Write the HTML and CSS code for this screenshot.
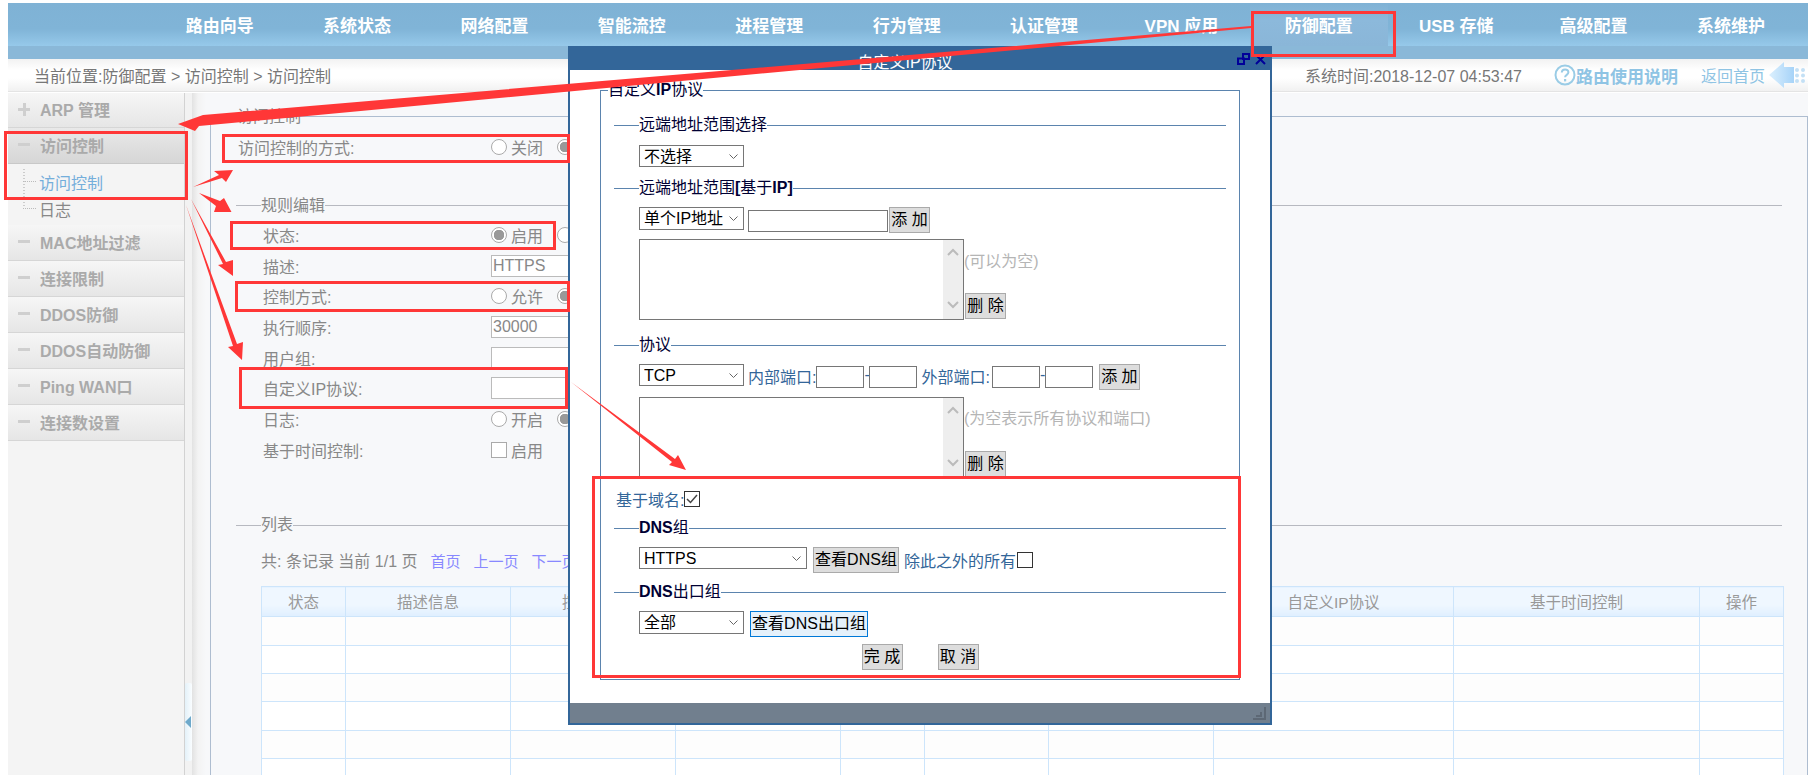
FILE: index.html
```html
<!DOCTYPE html>
<html lang="zh-CN">
<head>
  <meta charset="UTF-8">
  <title>访问控制</title>
  <link rel="stylesheet" href="styles.css">
</head>
<body>
  <div class="nav">
    <div class="nav-item">路由向导</div>
    <div class="nav-item">系统状态</div>
    <div class="nav-item">网络配置</div>
    <div class="nav-item">智能流控</div>
    <div class="nav-item">进程管理</div>
    <div class="nav-item">行为管理</div>
    <div class="nav-item">认证管理</div>
    <div class="nav-item">VPN 应用</div>
    <div class="nav-item active">防御配置</div>
    <div class="nav-item">USB 存储</div>
    <div class="nav-item">高级配置</div>
    <div class="nav-item">系统维护</div>
  </div>
  <div class="band"></div>

  <div class="crumbs">
    <div class="crumb-path">当前位置:防御配置 &gt; 访问控制 &gt; 访问控制</div>
    <div class="sys-time">系统时间:2018-12-07 04:53:47</div>
    <svg class="help-icon" width="22" height="22" viewBox="0 0 22 22">
      <circle cx="11" cy="11" r="9.5" fill="none" stroke="#9accE6" stroke-width="2"/>
      <path d="M7.8 8.6c0-4.2 6.6-4.2 6.6-.3 0 2.6-3.3 2.5-3.3 5" fill="none" stroke="#9accE6" stroke-width="2"/>
      <rect x="10" y="15" width="2.2" height="2.4" fill="#9accE6"/>
    </svg>
    <div class="help-link">路由使用说明</div>
    <div class="home-link">返回首页</div>
    <svg class="home-icon" width="37" height="27" viewBox="0 0 37 27">
      <defs>
        <linearGradient id="homeFill">
          <stop offset="0" stop-color="#dcf0fe"/>
          <stop offset="1" stop-color="#a6d3f8"/>
        </linearGradient>
      </defs>
      <polygon points="0,13 15,0 15,5 25,5 25,21 15,21 15,26" fill="url(#homeFill)"/>
      <g fill="#c3e0f5">
        <circle cx="28" cy="8" r="2"/><circle cx="34" cy="8" r="2"/>
        <circle cx="28" cy="13.500" r="2"/><circle cx="34" cy="13.500" r="2"/>
        <circle cx="28" cy="19" r="2"/><circle cx="34" cy="19" r="2"/>
      </g>
    </svg>
  </div>

  <div class="main">
    <div class="sidebar">
      <div class="side-head"><span class="toggle plus"></span>ARP 管理</div>
      <div class="side-head open"><span class="toggle"></span>访问控制</div>
      <div class="tree">
        <div class="tree-item current">访问控制</div>
        <div class="tree-item">日志</div>
      </div>
      <div class="side-head"><span class="toggle"></span>MAC地址过滤</div>
      <div class="side-head"><span class="toggle"></span>连接限制</div>
      <div class="side-head"><span class="toggle"></span>DDOS防御</div>
      <div class="side-head"><span class="toggle"></span>DDOS自动防御</div>
      <div class="side-head"><span class="toggle"></span>Ping WAN口</div>
      <div class="side-head"><span class="toggle"></span>连接数设置</div>
    </div>

    <div class="splitter"><div class="split-tab"><span class="split-arrow"></span></div></div>

    <div class="content">
      <div class="panel">
        <div class="panel-title">访问控制</div>
        <div class="form-row top-row">
          <div class="form-label wide">访问控制的方式:</div>
          <input class="radio" type="radio" name="way"><span class="opt">关闭</span>
          <input class="radio" type="radio" name="way" checked><span class="opt">开启</span>
        </div>

        <div class="sec-title gray rule-title"><span>规则编辑</span></div>
        <div class="rule-form">
          <div class="form-row">
            <div class="form-label">状态:</div>
            <input class="radio" type="radio" name="state" checked><span class="opt">启用</span>
            <input class="radio" type="radio" name="state"><span class="opt">禁用</span>
          </div>
          <div class="form-row">
            <div class="form-label">描述:</div>
            <input class="field" type="text" value="HTTPS">
          </div>
          <div class="form-row">
            <div class="form-label">控制方式:</div>
            <input class="radio" type="radio" name="ctrl"><span class="opt">允许</span>
            <input class="radio" type="radio" name="ctrl" checked><span class="opt">禁止</span>
          </div>
          <div class="form-row">
            <div class="form-label">执行顺序:</div>
            <input class="field" type="text" value="30000">
          </div>
          <div class="form-row">
            <div class="form-label">用户组:</div>
            <input class="field" type="text">
          </div>
          <div class="form-row">
            <div class="form-label">自定义IP协议:</div>
            <input class="field" type="text">
          </div>
          <div class="form-row">
            <div class="form-label">日志:</div>
            <input class="radio" type="radio" name="log"><span class="opt">开启</span>
            <input class="radio" type="radio" name="log" checked><span class="opt">关闭</span>
          </div>
          <div class="form-row">
            <div class="form-label">基于时间控制:</div>
            <span class="check light"></span><span class="opt">启用</span>
          </div>
        </div>

        <div class="sec-title gray list-title"><span>列表</span></div>
        <div class="pager">
          <span>共: 条记录 当前 1/1 页</span>
          <span class="pager-link">首页</span>
          <span class="pager-link">上一页</span>
          <span class="pager-link">下一页</span>
          <span class="pager-link">尾页</span>
        </div>

        <table class="list">
          <colgroup>
            <col class="c1"><col class="c2"><col class="c2"><col class="c2"><col class="c1">
            <col class="c3"><col class="c2"><col class="c4"><col class="c5"><col class="c1">
          </colgroup>
          <tr>
            <th>状态</th><th>描述信息</th><th>控制方式</th><th>执行顺序</th><th>日志</th>
            <th>用户组</th><th>目的地址</th><th>自定义IP协议</th><th>基于时间控制</th><th>操作</th>
          </tr>
          <tr><td></td><td></td><td></td><td></td><td></td><td></td><td></td><td></td><td></td><td></td></tr>
          <tr><td></td><td></td><td></td><td></td><td></td><td></td><td></td><td></td><td></td><td></td></tr>
          <tr><td></td><td></td><td></td><td></td><td></td><td></td><td></td><td></td><td></td><td></td></tr>
          <tr><td></td><td></td><td></td><td></td><td></td><td></td><td></td><td></td><td></td><td></td></tr>
          <tr><td></td><td></td><td></td><td></td><td></td><td></td><td></td><td></td><td></td><td></td></tr>
          <tr><td></td><td></td><td></td><td></td><td></td><td></td><td></td><td></td><td></td><td></td></tr>
        </table>
      </div>
    </div>
  </div>

  <div class="modal">
    <div class="modal-title">
      <span>自定义IP协议</span>
      <svg class="modal-icons" width="30" height="12" viewBox="0 0 30 12">
        <g fill="none" stroke="#000099" stroke-width="2">
          <rect x="1" y="5.500" width="6" height="5.500"/>
          <rect x="6" y="1" width="6" height="5"/>
          <path d="M19 11l9-9M19 2l9 9"/>
        </g>
      </svg>
    </div>

    <div class="modal-body">
      <fieldset class="proto">
        <legend>自定义<b>IP</b>协议</legend>

        <div class="sec-title first"><span>远端地址范围选择</span></div>
        <div class="row r-range">
          <span class="sel-wrap">
            <select class="sel"><option>不选择</option></select>
            <svg class="chev" width="9" height="5" viewBox="0 0 9 5"><path d="M.5.500l4 4 4-4" fill="none" stroke="#666"/></svg>
          </span>
        </div>

        <div class="sec-title gap-11"><span>远端地址范围<b>[</b>基于<b>IP]</b></span></div>
        <div class="row r-btn">
          <span class="sel-wrap tall">
            <select class="sel"><option>单个IP地址</option></select>
            <svg class="chev" width="9" height="5" viewBox="0 0 9 5"><path d="M.5.500l4 4 4-4" fill="none" stroke="#666"/></svg>
          </span>
          <input class="box ip-input" type="text">
          <button class="btn add">添 加</button>
        </div>
        <div class="list-row ip-list">
          <div class="listbox">
            <textarea></textarea>
            <div class="scroll">
              <svg width="12" height="8" viewBox="0 0 12 8"><path d="M1 7l5-5 5 5" fill="none" stroke="#bbb" stroke-width="2"/></svg>
              <svg width="12" height="8" viewBox="0 0 12 8"><path d="M1 1l5 5 5-5" fill="none" stroke="#bbb" stroke-width="2"/></svg>
            </div>
          </div>
          <div class="list-side">
            <div class="note">(可以为空)</div>
            <button class="btn del">删 除</button>
          </div>
        </div>

        <div class="sec-title gap-15"><span>协议</span></div>
        <div class="row r-btn">
          <span class="sel-wrap">
            <select class="sel"><option>TCP</option></select>
            <svg class="chev" width="9" height="5" viewBox="0 0 9 5"><path d="M.5.500l4 4 4-4" fill="none" stroke="#666"/></svg>
          </span>
          <span class="blue port-label">内部端口:</span>
          <input class="box port" type="text"><span class="dash">-</span><input class="box port" type="text">
          <span class="blue port-label outer">外部端口:</span>
          <input class="box port" type="text"><span class="dash">-</span><input class="box port" type="text">
          <button class="btn port-add">添 加</button>
        </div>
        <div class="list-row proto-list">
          <div class="listbox">
            <textarea></textarea>
            <div class="scroll">
              <svg width="12" height="8" viewBox="0 0 12 8"><path d="M1 7l5-5 5 5" fill="none" stroke="#bbb" stroke-width="2"/></svg>
              <svg width="12" height="8" viewBox="0 0 12 8"><path d="M1 1l5 5 5-5" fill="none" stroke="#bbb" stroke-width="2"/></svg>
            </div>
          </div>
          <div class="list-side">
            <div class="note">(为空表示所有协议和端口)</div>
            <button class="btn del">删 除</button>
          </div>
        </div>

        <div class="domain-row">
          <span class="blue">基于域名:</span>
          <span class="check ticked">
            <svg width="12" height="10" viewBox="0 0 12 10"><path d="M1 5l3.500 3.500L11 1" fill="none" stroke="#444" stroke-width="1.500"/></svg>
          </span>
        </div>

        <div class="sec-title gap-9"><span><b>DNS</b>组</span></div>
        <div class="row r-btn">
          <span class="sel-wrap dns">
            <select class="sel"><option>HTTPS</option></select>
            <svg class="chev" width="9" height="5" viewBox="0 0 9 5"><path d="M.5.500l4 4 4-4" fill="none" stroke="#666"/></svg>
          </span>
          <button class="btn view-dns">查看DNS组</button>
          <span class="blue except">除此之外的所有</span>
          <span class="check"></span>
        </div>

        <div class="sec-title gap-9"><span><b>DNS</b>出口组</span></div>
        <div class="row r-btn">
          <span class="sel-wrap tall">
            <select class="sel"><option>全部</option></select>
            <svg class="chev" width="9" height="5" viewBox="0 0 9 5"><path d="M.5.500l4 4 4-4" fill="none" stroke="#666"/></svg>
          </span>
          <button class="btn view-out">查看DNS出口组</button>
        </div>

        <div class="actions">
          <button class="btn">完 成</button>
          <button class="btn">取 消</button>
        </div>
      </fieldset>
    </div>

    <div class="modal-foot">
      <svg width="13" height="14" viewBox="0 0 13 14">
        <path d="M12 0v12H0M8 5v4H3" fill="none" stroke="#5d6875" stroke-width="2"/>
      </svg>
    </div>
  </div>

  <!-- red notes drawn on top of the screenshot -->
  <svg class="notes" width="1812" height="775" viewBox="0 0 1812 775">
    <g fill="none" stroke="#ff3737" stroke-width="3">
      <rect x="1252.500" y="12.500" width="142" height="43"/>
      <rect x="5.500" y="132.500" width="181" height="66"/>
      <rect x="223.500" y="135.500" width="345" height="26"/>
      <rect x="231.500" y="222.500" width="323" height="26"/>
      <rect x="236.500" y="282.500" width="332" height="28"/>
      <rect x="240.500" y="368.500" width="326" height="39"/>
      <rect x="593.500" y="477.500" width="646" height="199"/>
    </g>
    <g fill="#ff3737">
      <polygon points="1251,26 203,115 178,124 195,131 199,126 1251,28"/>
      <polygon points="193,187 219,175 214,171 233,170 226,182 222,178"/>
      <polygon points="199,193 220,201 224,198 231.500,212 214,212 216,206"/>
      <polygon points="191,199 226,262 233,260 233,276 218,265 223,264"/>
      <polygon points="186,205 237,344 243,342 242,360 228,347 233,346"/>
      <polygon points="571,382 675,459 678,455 686,470 669,465 672,462"/>
    </g>
  </svg>
</body>
</html>
```

FILE: styles.css
```css
* {
  box-sizing: border-box;
}

html,
body {
  height: 775px;
  overflow: hidden;
}

body {
  margin: 0;
  padding: 3px 4px 0 8px;
  background: #fff;
  font-family: "Liberation Sans", "Noto Sans CJK SC", sans-serif;
  font-size: 16px;
  color: #888;
}

/* top bar */
.nav {
  display: flex;
  height: 43px;
  padding-left: 143px;
  background: linear-gradient(#7fb2d5 0%, #80b4d7 60%, #96c9ea 100%);
}

.nav-item {
  display: flex;
  width: 137.4px;
  align-items: center;
  justify-content: center;
  color: #fff;
  font-size: 17px;
  font-weight: bold;
}

.nav-item.active {
  background: linear-gradient(#7fb2d5 0, #8cb9db 40%, #8ab6d8 100%);
}

.band {
  height: 13px;
  background: #8ab8d8;
}

.crumbs {
  display: flex;
  height: 33px;
  align-items: center;
  padding: 0 2px 0 26px;
  background: linear-gradient(#f2f2f2, #fff 35%, #fff 60%, #f1f1f1);
  border-bottom: 1px solid #e4e4e4;
  color: #777;
}

.crumb-path {
  flex: 1;
}

.help-icon {
  margin-left: 32px;
}

.help-link {
  color: #8fc4e4;
  font-size: 17px;
  font-weight: bold;
}

.home-link {
  margin-left: 23px;
  color: #8fc4e4;
}

.home-icon {
  margin-left: 4px;
}

/* page body */
.main {
  display: flex;
  height: 683px;
  margin-top: 1px;
}

.sidebar {
  width: 177px;
  flex: none;
  background: #f4f4f4;
  border-right: 1px solid #d2d2d2;
}

.side-head {
  display: flex;
  height: 36px;
  align-items: center;
  padding: 0 0 2px 10px;
  background: linear-gradient(#f6f6f6, #e6e6e6);
  border-bottom: 1px solid #d6d6d6;
  color: #aaa;
  font-weight: bold;
}

.side-head:first-child {
  height: 35px;
}

.side-head.open {
  background: linear-gradient(#e9e9e9, #d6d6d6);
  border-bottom-color: #c8c8c8;
}

.toggle {
  position: relative;
  width: 12px;
  height: 3px;
  margin-right: 10px;
  background: #cfcfcf;
}

.toggle.plus::after {
  content: "";
  position: absolute;
  top: -5px;
  left: 5px;
  width: 3px;
  height: 13px;
  background: #cfcfcf;
}

.tree {
  height: 61px;
  padding: 4px 0 0 15px;
  background: repeating-linear-gradient(#ccc 0 1px, transparent 1px 3px) 15px 5px / 2px 39px no-repeat;
}

.tree-item {
  display: flex;
  height: 27px;
  align-items: center;
}

.tree-item::before {
  content: "";
  width: 13px;
  margin-right: 3px;
  border-top: 1px dotted #bbb;
}

.tree-item.current {
  color: #74aedb;
}

.splitter {
  width: 7px;
  flex: none;
  padding-top: 590px;
  background: #f2f2f2;
}

.split-tab {
  display: flex;
  height: 78px;
  align-items: center;
  background: linear-gradient(90deg, #e3f1f9, #fafdff);
  border-radius: 2px;
}

.split-arrow {
  border-top: 6px solid transparent;
  border-bottom: 6px solid transparent;
  border-right: 6px solid #6ea9cb;
}

.content {
  flex: 1;
  padding: 23px 0 0 18px;
  background: linear-gradient(90deg, #e2e2e2, #f3f3f3 6px, #f7f8fa 14px);
}

.panel {
  height: 660px;
  background: #f7f8fa;
  border: 1px solid #aebdd0;
  border-bottom: 0;
}

.panel-title {
  height: 18px;
  margin: -9px 0 0 26px;
  line-height: 18px;
}

.form-row {
  display: flex;
  height: 30.7px;
  align-items: center;
  color: #888;
}

.top-row {
  margin: 6px 0 0 27px;
}

.form-label {
  width: 228px;
  flex: none;
}

.form-label.wide {
  width: 253px;
}

.rule-form {
  margin: 4px 0 0 52px;
}

.radio {
  width: 16px;
  height: 16px;
  flex: none;
  margin: 0 4px 0 0;
  appearance: none;
  background: #fff;
  border: 1px solid #aaa;
  border-radius: 50%;
}

.radio:checked {
  background: radial-gradient(circle, #999 0 5px, #fff 5.5px);
}

.opt {
  width: 46px;
  flex: none;
  color: #888;
}

.field {
  width: 160px;
  height: 22px;
  flex: none;
  padding: 0 1px;
  background: #fff;
  border: 1px solid #bbb;
  font: 16px "Liberation Sans", "Noto Sans CJK SC", sans-serif;
  color: #888;
}

/* section heading with a rule running either side */
.sec-title {
  display: flex;
  height: 20px;
  align-items: center;
  margin: 0 13px;
  color: #003;
  line-height: 20px;
}

.sec-title::before {
  content: "";
  width: 25px;
  height: 1px;
  background: #5b84ae;
}

.sec-title::after {
  content: "";
  flex: 1;
  height: 1px;
  background: #5b84ae;
}

.sec-title.gray {
  margin: 0 25px;
  color: #888;
}

.sec-title.gray::before,
.sec-title.gray::after {
  background: #b7b9c0;
}

.rule-title {
  margin-top: 33px !important;
}

.list-title {
  margin-top: 50px !important;
}

.pager {
  display: flex;
  height: 20px;
  align-items: center;
  gap: 13px;
  margin: 15px 0 0 50px;
}

.pager-link {
  color: #8888ff;
  font-size: 15px;
}

.pager-link:first-of-type {
  margin-left: 3px;
}

.list {
  width: 1521px;
  margin: 16px 0 0 50px;
  table-layout: fixed;
  border-collapse: collapse;
}

.c1 {
  width: 84px;
}

.c2 {
  width: 165px;
}

.c3 {
  width: 124px;
}

.c4 {
  width: 240px;
}

.c5 {
  width: 246px;
}

.list th,
.list td {
  height: 28.4px;
  padding: 0;
  border: 1px solid #cde5fb;
  background: #fff;
}

.list tr:nth-child(even) td {
  background: #fdfdfd;
}

.list th {
  height: 30px;
  padding-bottom: 2px;
  background: linear-gradient(#eff7ff 60%, #dfefff);
  color: #999;
  font-size: 15.500px;
  font-weight: normal;
}

/* dialog */
.modal {
  position: absolute;
  top: 46px;
  left: 568px;
  display: flex;
  width: 704px;
  height: 679px;
  flex-direction: column;
  background: #fff;
  border: 2px solid #336699;
}

.modal-title {
  position: relative;
  height: 22px;
  flex: none;
  overflow: hidden;
  padding: 5px 30px 0 0;
  background: #336699;
  color: #fff;
  font-size: 16px;
  line-height: 20px;
  text-align: center;
}

.modal-icons {
  position: absolute;
  top: 5px;
  right: 3px;
}

.modal-body {
  flex: 1;
  padding: 11px 0 0 30px;
  color: #000;
}

.proto {
  width: 640px;
  height: 599px;
  margin: 0;
  padding: 0;
  border: 1px solid #5b84ae;
}

.proto legend {
  height: 18px;
  margin-left: 7px;
  padding: 0;
  color: #003;
  line-height: 18px;
}

.sec-title.first {
  margin-top: 16px;
}

.gap-9 {
  margin-top: 9px;
}

.gap-11 {
  margin-top: 11px;
}

.gap-15 {
  margin-top: 15px;
}

.row {
  display: flex;
  align-items: flex-start;
  margin-left: 38px;
}

.r-range {
  margin-top: 10px;
}

.r-btn {
  margin-top: 9px;
}

.sel-wrap {
  position: relative;
  display: block;
  width: 105px;
  height: 22px;
  flex: none;
}

.sel-wrap.tall {
  height: 23px;
}

.sel-wrap.dns {
  width: 168px;
}

.sel {
  width: 100%;
  height: 100%;
  padding: 0 0 0 4px;
  appearance: none;
  background: #fff;
  border: 1px solid #767676;
  border-radius: 0;
  font: 16px "Liberation Sans", "Noto Sans CJK SC", sans-serif;
  color: #000;
}

.chev {
  position: absolute;
  top: 9px;
  right: 6px;
}

.box {
  height: 22px;
  flex: none;
  padding: 0 1px;
  border: 1px solid #767676;
  background: #fff;
}

.ip-input {
  width: 140px;
  margin: 3px 0 0 4px;
}

.port {
  width: 48px;
  margin-top: 2px;
}

.dash {
  width: 5px;
  margin-top: 2px;
  color: #336699;
}

.blue {
  color: #336699;
}

.port-label {
  margin-left: 4px;
}

.port-label.outer {
  margin-right: 2px;
}

.btn {
  width: 41px;
  height: 26px;
  padding: 0;
  background: #ddd;
  border: 1px solid #aaa;
  font: 16px/1 "Liberation Sans", "Noto Sans CJK SC", sans-serif;
  color: #000;
  white-space: nowrap;
}

.add {
  margin-left: 1px;
}

.port-add {
  margin-left: 6px;
}

.list-row {
  display: flex;
  height: 81px;
  margin-left: 38px;
}

.ip-list {
  margin-top: 6px;
}

.proto-list {
  margin-top: 7px;
  height: 80px;
}

.listbox {
  display: flex;
  width: 325px;
  overflow: hidden;
  border: 1px solid #767676;
}

.proto-list .listbox {
  border-bottom: 0;
}

.listbox textarea {
  flex: 1;
  min-width: 0;
  padding: 0;
  border: 0;
  outline: 0;
  resize: none;
}

.scroll {
  display: flex;
  width: 20px;
  flex-direction: column;
  align-items: center;
  justify-content: space-between;
  padding: 8px 0 10px;
  background: #eee;
}

.list-side {
  display: flex;
  flex-direction: column;
  align-items: flex-start;
  color: #b5b5b5;
}

.note {
  height: 20px;
  line-height: 20px;
  white-space: nowrap;
}

.ip-list .note {
  margin-top: 13px;
}

.ip-list .del {
  margin: 21px 0 0 1px;
}

.proto-list .note {
  margin-top: 12px;
}

.proto-list .del {
  margin: 22px 0 0 1px;
}

.domain-row {
  display: flex;
  height: 20px;
  align-items: center;
  margin: 12px 0 0 15px;
}

.check {
  display: flex;
  width: 16px;
  height: 16px;
  flex: none;
  align-items: center;
  justify-content: center;
  margin-right: 4px;
  background: #fff;
  border: 1px solid #333;
}

.check.light {
  border-color: #aaa;
}

.view-dns {
  width: 86px;
  margin-left: 6px;
}

.except {
  margin: 1px 1px 0 5px;
}

.r-btn .check {
  margin-top: 5px;
}

.view-out {
  width: 118px;
  margin-left: 6px;
  background: #e5f1fb;
  border-color: #0078d7;
}

.actions {
  display: flex;
  justify-content: center;
  gap: 35px;
  margin-top: 7px;
}

.modal-foot {
  display: flex;
  height: 20px;
  flex: none;
  justify-content: flex-end;
  padding: 4px 4px 0 0;
  background: #717f8e;
}

/* annotations over everything */
.notes {
  position: absolute;
  top: 0;
  left: 0;
  pointer-events: none;
}
```
